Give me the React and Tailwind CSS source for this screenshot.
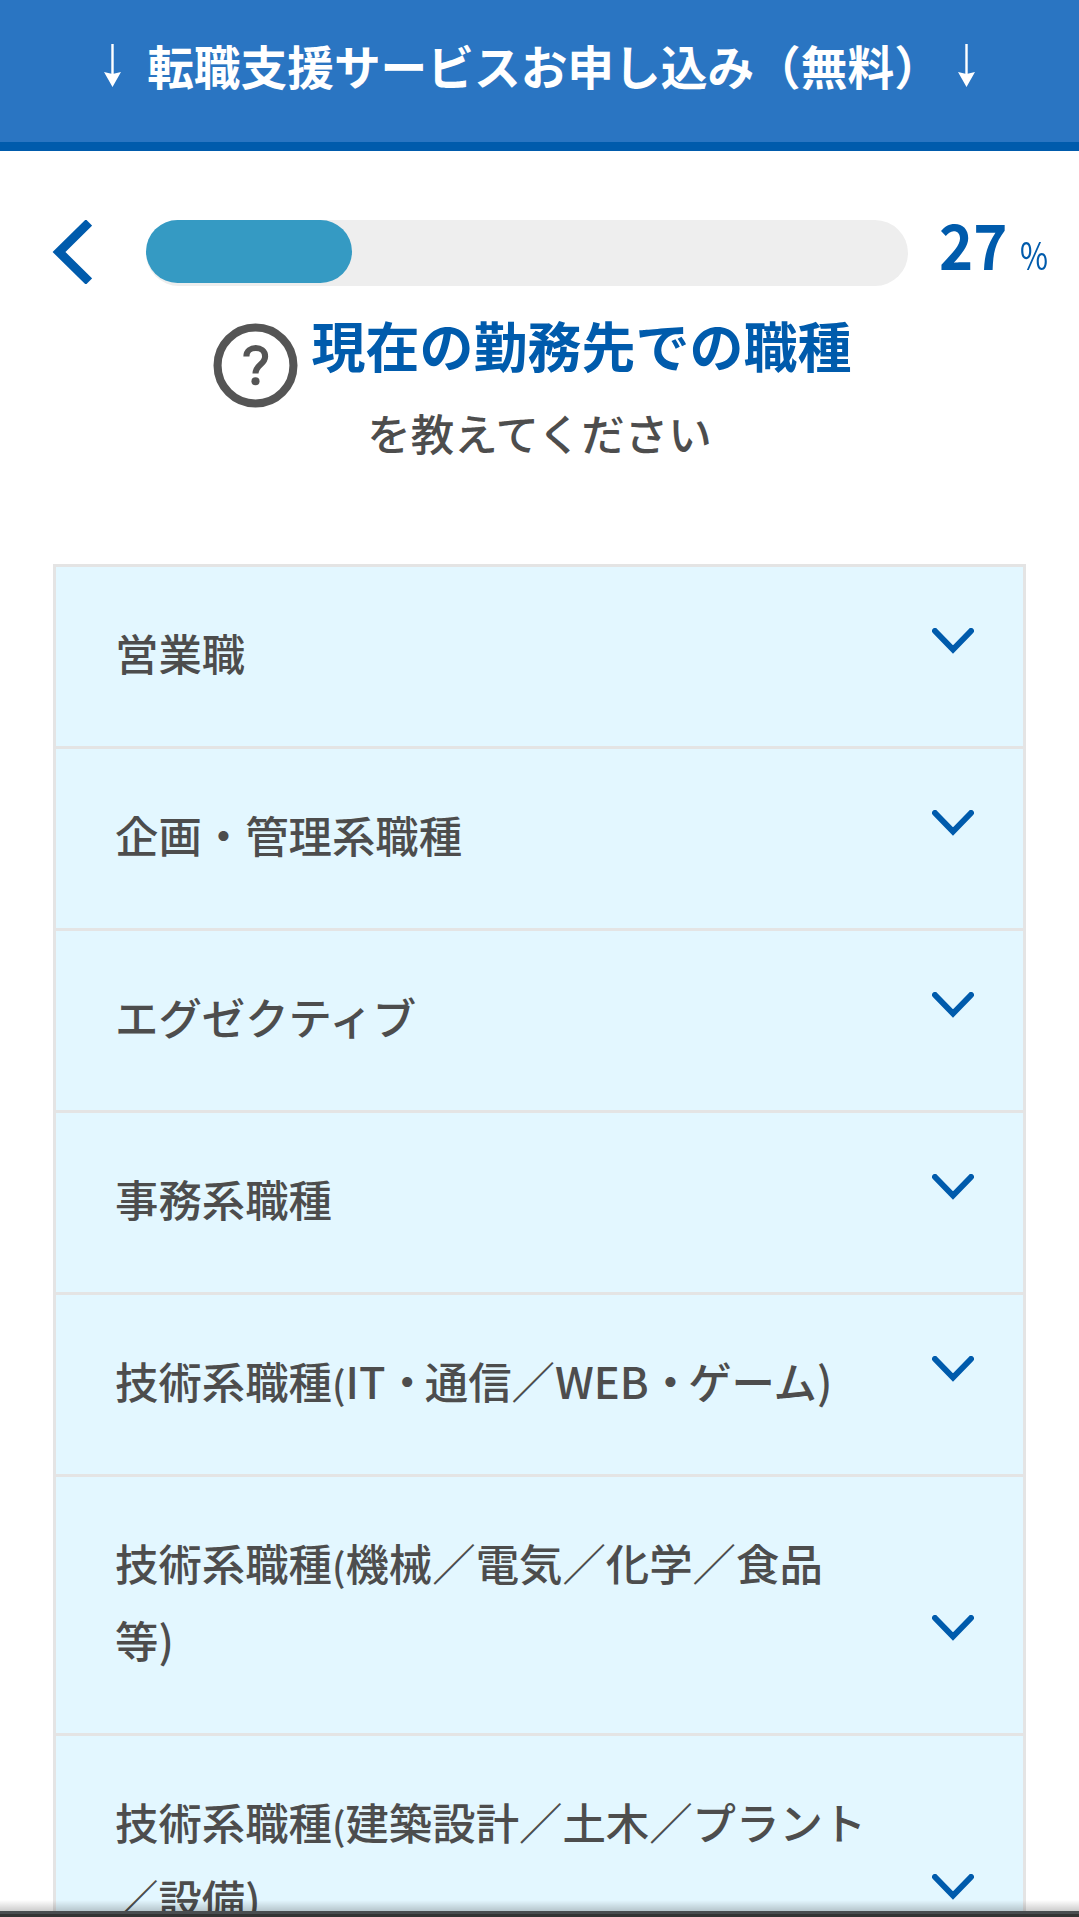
const font = { fontFamily: '"Noto Sans CJK JP", "Noto Sans", sans-serif' };

function Paren() {
  return <span className="text-[38px] leading-none">(</span>;
}

function Dot() {
  return <span className="tracking-[-4px]">・</span>;
}

const rows = [
  "営業職",
  "企画・管理系職種",
  "エグゼクティブ",
  "事務系職種",
  <>技術系職種<Paren />IT<Dot />通信／WEB<Dot />ゲーム)</>,
  <>技術系職種<Paren />機械／電気／化学／食品等)</>,
  <>技術系職種<Paren />建築設計／土木／プラント／設備)</>,
];

function Chevron() {
  return (
    <svg width="42" height="26" viewBox="0 0 42 26" className="shrink-0 mb-[37px] mr-[49px] -mt-[40px]">
      <path d="M3 3 L21 21.5 L39 3" fill="none" stroke="#005bac" strokeWidth="6" strokeLinecap="round" strokeLinejoin="miter" />
    </svg>
  );
}

function DownArrow({ className }) {
  return (
    <svg width="17" height="43" viewBox="0 0 17 43" className={className}>
      <rect x="7.3" y="0" width="2.4" height="30" fill="#ffffff" />
      <path d="M0 28 L8.5 43 L17 28 L8.5 30 Z" fill="#ffffff" />
    </svg>
  );
}

export default function App() {
  return (
    <div className="relative h-[1917px] w-[1079px] overflow-hidden bg-white" style={font}>
      <div className="h-[151px] bg-[#2a75c2] border-b-[9px] border-[#005bac] flex items-center justify-center text-white text-[46.7px] font-bold leading-none whitespace-nowrap pb-[12px]">
        <DownArrow className="mr-[26px] shrink-0" />
        <span>転職支援サービスお申し込み（無料）</span>
        <DownArrow className="ml-[17px] shrink-0" />
      </div>

      <div className="flex items-start mt-[69px] h-[66px]">
        <svg width="40" height="64" viewBox="0 0 40 64" className="ml-[52px] mr-[54px] shrink-0">
          <path d="M37 2.5 L7 32 L37 61.5" fill="none" stroke="#005bac" strokeWidth="9" />
        </svg>
        <div className="w-[762px] h-[66px] bg-[#eeeeee] rounded-[33px] shrink-0">
          <div className="w-[206px] h-[63px] bg-[#359ac3] rounded-[32px]" />
        </div>
        <div className="flex items-baseline text-[#005bac] ml-[31px] leading-none -mt-[9px]">
          <span className="text-[63px] font-bold origin-left scale-x-[0.92] w-[66px]">27</span>
          <span className="text-[38px] ml-[15px] origin-left scale-x-[0.8]">%</span>
        </div>
      </div>

      <div className="flex flex-col items-center mt-[19px] h-[259px]">
        <div className="flex items-start pr-[15px]">
          <svg width="85" height="85" viewBox="0 0 84 84" className="mt-[18px] mr-[14px] blur-[0.7px] shrink-0">
            <circle cx="42" cy="42" r="37.5" fill="none" stroke="#555555" strokeWidth="8" />
            <path d="M33 33 C33 22 51.5 22 51.5 33 C51.5 41 42 41 42 50" fill="none" stroke="#555555" strokeWidth="6" />
            <circle cx="42" cy="57.5" r="4" fill="#555555" />
          </svg>
          <div className="text-[54px] leading-[80px] font-bold text-[#005bac] whitespace-nowrap">現在の勤務先での職種</div>
        </div>
        <div className="text-[43.5px] leading-[64px] font-medium text-[#4d4d4d] -mt-[7px] whitespace-nowrap">を教えてください</div>
      </div>

      <div className="mx-[53px] border-x-[3px] border-t-[3px] border-[#e4e4e4]">
        {rows.map((r, i) => (
          <div key={i} className="flex items-end justify-between bg-[#e3f7ff] border-b-[3px] border-[#e4e4e4] pl-[59px] pt-[47px] pb-[55px]">
            <div className="w-[755px] text-[43.4px] leading-[77px] font-medium text-[#4d4d4d]">{r}</div>
            <Chevron />
          </div>
        ))}
      </div>

      <div className="absolute left-0 right-0 bottom-0">
        <div className="h-[11px] bg-gradient-to-b from-[#00000000] to-[#00000033]" />
        <div className="h-[3px] bg-[#4a4d50]" />
        <div className="h-[3px] bg-[#333333]" />
      </div>
    </div>
  );
}
